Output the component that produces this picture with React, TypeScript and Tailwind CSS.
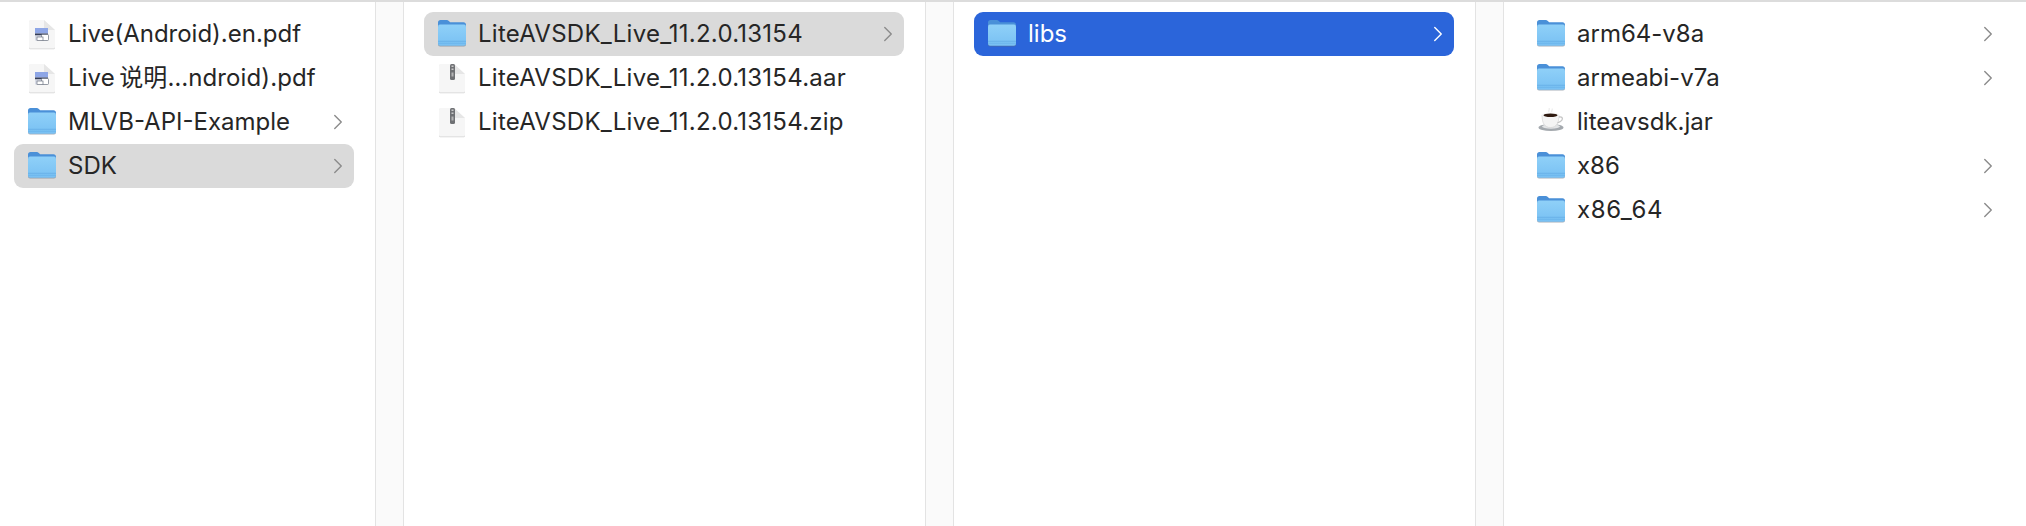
import { ChevronRight } from "lucide-react";

type Kind = "folder" | "pdf" | "zip" | "jar";

interface Item {
  name: string;
  kind: Kind;
  state?: "muted" | "active";
  tracking?: string;
}

interface Column {
  width: string;
  pad: string;
  items: Item[];
}

const COLUMNS: Column[] = [
  {
    width: "w-[404px]",
    pad: "pl-[14px] pr-[21px]",
    items: [
      { name: "Live(Android).en.pdf", kind: "pdf" },
      { name: "Live\u2009说明…ndroid).pdf", kind: "pdf", tracking: "tracking-[0.1px]" },
      { name: "MLVB-API-Example", kind: "folder" },
      { name: "SDK", kind: "folder", state: "muted" },
    ],
  },
  {
    width: "w-[550px]",
    pad: "pl-[20px] pr-[21px]",
    items: [
      { name: "LiteAVSDK_Live_11.2.0.13154", kind: "folder", state: "muted", tracking: "tracking-[0.25px]" },
      { name: "LiteAVSDK_Live_11.2.0.13154.aar", kind: "zip", tracking: "tracking-[0.25px]" },
      { name: "LiteAVSDK_Live_11.2.0.13154.zip", kind: "zip", tracking: "tracking-[0.25px]" },
    ],
  },
  {
    width: "w-[550px]",
    pad: "pl-[20px] pr-[21px]",
    items: [{ name: "libs", kind: "folder", state: "active" }],
  },
];

const LAST: Item[] = [
  { name: "arm64-v8a", kind: "folder" },
  { name: "armeabi-v7a", kind: "folder" },
  { name: "liteavsdk.jar", kind: "jar" },
  { name: "x86", kind: "folder" },
  { name: "x86_64", kind: "folder", tracking: "tracking-[0.7px]" },
];

function FolderIcon({ id }: { id: string }) {
  return (
    <svg width="30" height="28" viewBox="0 0 30 28" className="shrink-0">
      <defs>
        <linearGradient id={id} x1="0" y1="0" x2="0" y2="1">
          <stop offset="0" stopColor="#8fd0f8" />
          <stop offset="1" stopColor="#78c0f3" />
        </linearGradient>
      </defs>
      <path d="M1 2.500C1 1 2 0 3.500 0h6.200c.9 0 1.500.3 2.100.9l1.400 1.400h13.300c1.500 0 2.500 1 2.500 2.500V10H1z" fill="#4a90d8" />
      <rect x="1" y="5" width="28" height="21.400" rx="2" fill="#5f6f80" opacity="0.55" />
      <rect x="1" y="4.600" width="28" height="21.200" rx="2" fill={`url(#${id})`} />
      <rect x="1" y="20.800" width="28" height="1" fill="#5ea6e2" opacity="0.6" />
      <rect x="1" y="22.800" width="28" height="1" fill="#5ea6e2" opacity="0.45" />
    </svg>
  );
}

function DocShape() {
  return (
    <>
      <path d="M1 2.500C1 1.700 1.700 1 2.500 1H16l11 10v17c0 .8-.7 1.500-1.500 1.500h-23C1.700 29.500 1 28.800 1 28z" fill="#d2d2d2" transform="translate(0 .7)" />
      <path d="M1 2.500C1 1.700 1.700 1 2.500 1H16l11 10v17c0 .8-.7 1.500-1.500 1.500h-23C1.700 29.500 1 28.800 1 28z" fill="#f6f6f6" />
      <path d="M16 1l11 10h-9.500c-.8 0-1.500-.7-1.500-1.500z" fill="#e6e6e6" />
    </>
  );
}

function PdfIcon() {
  return (
    <svg width="28" height="31" viewBox="0 0 28 31" className="shrink-0">
      <DocShape />
      <rect x="7" y="9" width="13" height="5.500" fill="#8ea6e6" />
      <rect x="7" y="14.500" width="13" height="2" fill="#343d58" />
      <rect x="7" y="16.500" width="13" height="5" fill="#d8dce6" />
      <rect x="13.500" y="15.500" width="7" height="6" rx="1" fill="#fff" stroke="#6b7280" strokeWidth="0.7" />
      <rect x="9" y="18" width="6" height="3.500" fill="#fff" stroke="#6b7280" strokeWidth="0.7" />
    </svg>
  );
}

function ZipIcon() {
  return (
    <svg width="28" height="31" viewBox="0 0 28 31" className="shrink-0">
      <DocShape />
      <rect x="12" y="1" width="5" height="16" rx="1.500" fill="#6f7174" />
      <rect x="13.500" y="2.500" width="2" height="1.500" fill="#c9c9c9" />
      <rect x="13.500" y="5.500" width="2" height="1.500" fill="#c9c9c9" />
      <rect x="13.500" y="9.500" width="2" height="4" fill="#b5b5b5" />
    </svg>
  );
}

function JarIcon() {
  return (
    <svg width="28" height="28" viewBox="0 0 28 28" className="shrink-0">
      <ellipse cx="14" cy="19.500" rx="12.500" ry="3.600" fill="#a4a9ae" />
      <ellipse cx="14" cy="18.500" rx="9" ry="2.200" fill="#e2e4e6" />
      <path d="M5 7c0 8 2.500 12.500 8.500 12.500S22 15 22 7z" fill="#f4f4f4" stroke="#c8c8c8" strokeWidth="0.5" />
      <path d="M22 9c3-.6 4 1 3 3-.8 1.600-2.400 2.200-4.500 2.800" fill="none" stroke="#c6c6c6" strokeWidth="1.300" />
      <ellipse cx="13.500" cy="7" rx="8.500" ry="2.500" fill="#f7f7f7" />
      <ellipse cx="13.500" cy="7.300" rx="7" ry="1.800" fill="#2f1a10" />
      <path d="M12 4c-1-1.300 1-2.200 0-4M15 4c-1-1.300 1-2.200 0-3.500" stroke="#ececec" strokeWidth="1.200" fill="none" />
    </svg>
  );
}

function Row({ item, id }: { item: Item; id: string }) {
  const active = item.state === "active";
  const bg = active ? "bg-[#2b65da]" : item.state === "muted" ? "bg-[#dadada]" : "";
  const isFolder = item.kind === "folder";
  return (
    <div className={`flex h-[44px] items-center rounded-[9px] pl-[13px] pr-[3px] ${bg}`}>
      <div className="flex w-[30px] shrink-0 justify-center">
        {isFolder && <FolderIcon id={id} />}
        {item.kind === "pdf" && <PdfIcon />}
        {item.kind === "zip" && <ZipIcon />}
        {item.kind === "jar" && <JarIcon />}
      </div>
      <span
        className={`ml-[11px] flex-1 whitespace-nowrap text-[24px] leading-none ${item.tracking ?? ""} ${
          active ? "text-white" : "text-[#262626]"
        }`}
      >
        {item.name}
      </span>
      {isFolder && (
        <ChevronRight
          size={26}
          strokeWidth={1.300}
          className={active ? "text-white" : "text-[#8b8b8b]"}
        />
      )}
    </div>
  );
}

export default function App() {
  return (
    <div
      className="flex h-[526px] w-[2026px] overflow-hidden border-t-2 border-[#dcdcdc] bg-white"
      style={{ fontFamily: 'Inter, "Noto Sans CJK SC", sans-serif' }}
    >
      {COLUMNS.map((col, i) => (
        <div key={i} className={`flex shrink-0 ${col.width}`}>
          <div className={`min-w-0 flex-1 pt-[10px] ${col.pad}`}>
            {col.items.map((item, j) => (
              <Row key={item.name} item={item} id={`f-${i}-${j}`} />
            ))}
          </div>
          <div className="w-[29px] shrink-0 border-x border-[#e3e3e3] bg-[#fafafa]" />
        </div>
      ))}
      <div className="min-w-0 flex-1 pl-[19px] pr-[22px] pt-[10px]">
        {LAST.map((item, j) => (
          <Row key={item.name} item={item} id={`f-3-${j}`} />
        ))}
      </div>
    </div>
  );
}
